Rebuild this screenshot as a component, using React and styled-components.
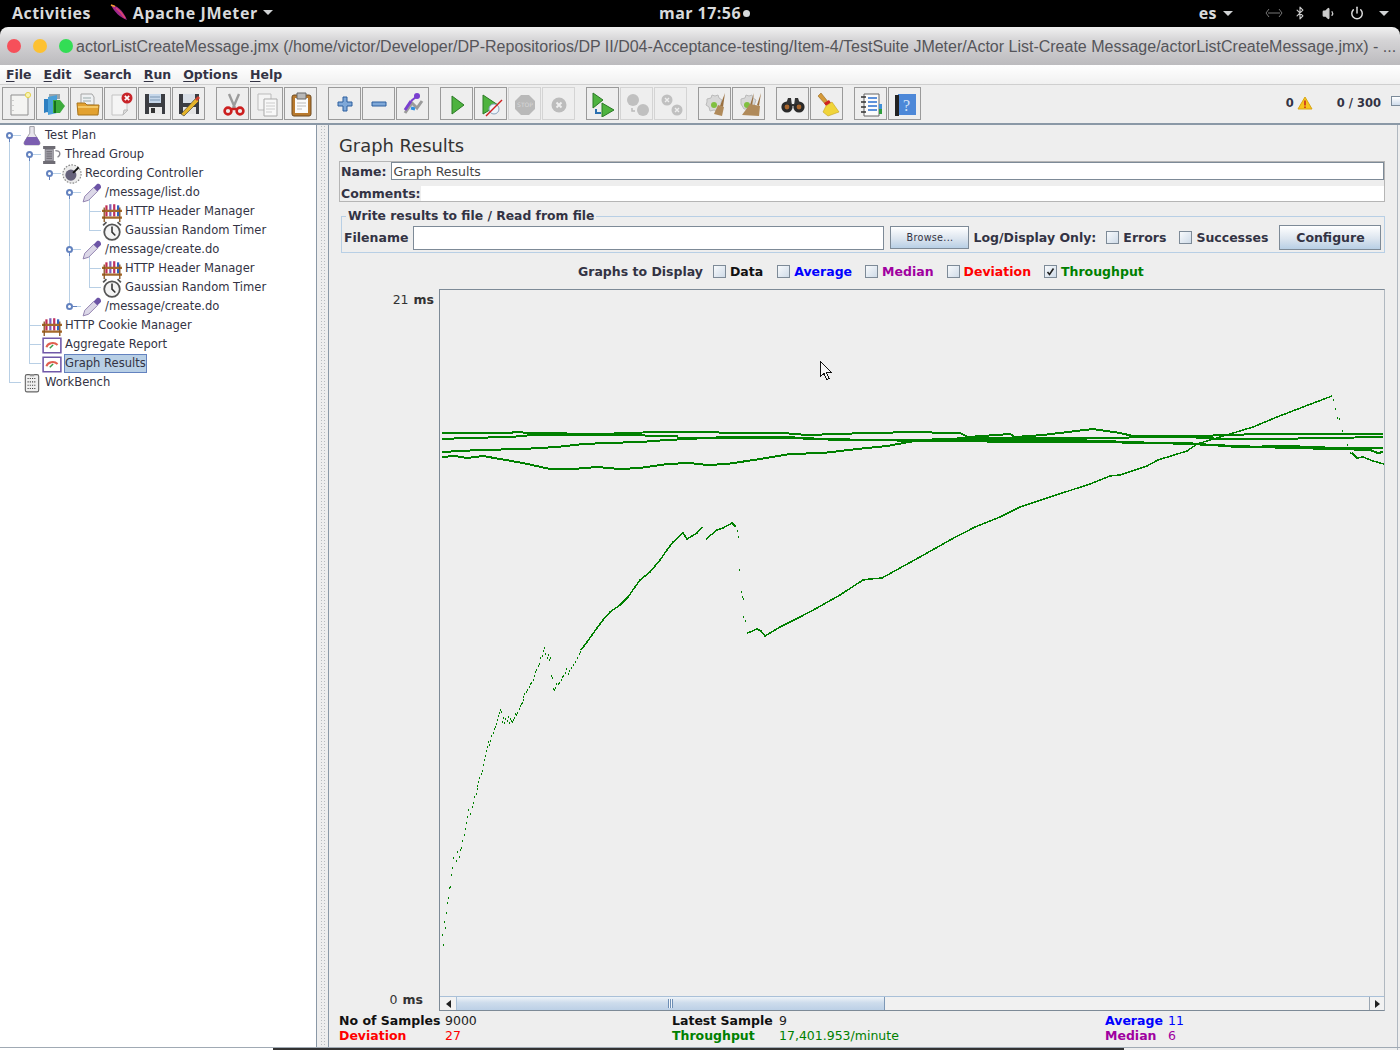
import React from 'react';
import styled, { createGlobalStyle } from 'styled-components';
import { Power, Volume1, Bluetooth } from 'lucide-react';

const GlobalStyle = createGlobalStyle`
  html, body { margin: 0; padding: 0; background: #000; }
  body { width: 1400px; height: 1050px; overflow: hidden; font-family: "DejaVu Sans", sans-serif; }
`;

const Screen = styled.div`
  width: 1400px;
  height: 1050px;
  display: flex;
  flex-direction: column;
  overflow: hidden;
  position: relative;
`;

const TopBar = styled.div`
  height: 27px;
  background: #000;
  color: #d8dadc;
  display: flex;
  align-items: center;
  font: bold 16px "Open Sans", "Noto Sans", sans-serif;
  letter-spacing: 0.45px;
  padding: 0 0 2px 12px;
  box-sizing: border-box;
  position: relative;
`;

const AppName = styled.div`
  display: flex;
  align-items: center;
  margin-left: 19px;
  gap: 5px;
  letter-spacing: 0.65px;
`;

const Clock = styled.div`
  position: absolute;
  left: 659px;
  top: 2px;
  display: flex;
  align-items: center;
`;

const Bullet = styled.i`
  width: 7px;
  height: 7px;
  border-radius: 50%;
  background: #d8dadc;
  margin-left: 2px;
`;

const Tray = styled.div`
  position: absolute;
  right: 11px;
  top: 2px;
  display: flex;
  align-items: center;
  color: #d8dadc;
`;

const Caret = styled.span`
  width: 0;
  height: 0;
  border-left: 5px solid transparent;
  border-right: 5px solid transparent;
  border-top: 5px solid #d0d2d4;
  margin-left: ${p => p.$gap || 0}px;
`;

const TitleBar = styled.div`
  height: 38px;
  background: linear-gradient(#f1f1f1 0, #d5d4d6 35%, #bcbbbe 100%);
  border-radius: 8px 8px 0 0;
  display: flex;
  align-items: center;
  padding-left: 7px;
  box-sizing: border-box;
  white-space: nowrap;
  overflow: hidden;
`;

const Dot = styled.span`
  width: 14px;
  height: 14px;
  border-radius: 50%;
  background: ${p => p.$c};
  margin-right: ${p => p.$gap}px;
  flex: none;
`;

const TitleText = styled.span`
  font: 16px "Liberation Sans", sans-serif;
  color: #55555a;
  margin-top: 2px;
`;

const MenuBar = styled.div`
  height: 20px;
  background: linear-gradient(#ffffff, #f1f1f1);
  display: flex;
  align-items: center;
  padding-left: 6px;
  gap: 12px;
  font: bold 12.5px "DejaVu Sans", sans-serif;
  color: #333344;
  border-bottom: 1px solid #cfcfcf;
  box-sizing: border-box;
  & u { text-decoration-thickness: 1px; text-underline-offset: 2px; }
`;

const ToolBar = styled.div`
  height: 40px;
  background: #eeeeee;
  display: flex;
  align-items: center;
  padding: 0 0 1px 2px;
  box-sizing: border-box;
  border-bottom: 2px solid #8a98a6;
  position: relative;
`;

const ToolGroup = styled.div`
  display: flex;
  gap: 1px;
  margin-right: 11px;
`;

const ToolButton = styled.div`
  width: 31px;
  height: 31px;
  border: 1px solid ${p => (p.$off ? '#d4d4d4' : '#9a9a9a')};
  background: #eeeeee;
  display: flex;
  align-items: center;
  justify-content: center;
  & svg { display: block; }
`;

const Counters = styled.div`
  position: absolute;
  right: 0;
  top: 11px;
  display: flex;
  align-items: center;
  font: bold 11.5px "DejaVu Sans", sans-serif;
  color: #333344;
`;

const MiniBox = styled.span`
  width: 8px;
  height: 8px;
  border: 1px solid #7b8a99;
  background: linear-gradient(#ffffff, #cfdceb);
  margin: -4px -1px 0 10px;
`;

const Body = styled.div`
  flex: 1;
  display: flex;
  background: #eeeeee;
  min-height: 0;
`;

const TreePane = styled.div`
  width: 316px;
  background: #ffffff;
  border-right: 1px solid #8a98a6;
  padding-top: 1px;
  flex: none;
  position: relative;
`;

const Row = styled.div`
  height: 19px;
  display: flex;
  align-items: center;
  position: relative;
  padding-left: ${p => p.$depth * 20 + 23}px;
  font: 11.55px "DejaVu Sans", sans-serif;
  color: #333344;
  & > svg { margin: 0 -1px; flex: none; position: relative; }
`;

const RowLabel = styled.span`
  margin-left: 3px;
  padding: 0 1px;
  height: 19px;
  line-height: 18px;
  box-sizing: border-box;
  ${p => p.$selected && 'background: #b8cfe5; outline: 1px solid #6382bf; outline-offset: -1px;'}
`;

const Wire = styled.i`
  position: absolute;
  background: #b8cfe5;
`;

const Handle = styled.b`
  position: absolute;
  width: 3px;
  height: 3px;
  border: 2px solid #6382bf;
  border-radius: 50%;
  background: #fff;
  top: 6px;
  &::after {
    content: '';
    position: absolute;
    background: #6382bf;
    ${p => (p.$closed
      ? 'left: 5px; top: 1px; width: 4px; height: 1px;'
      : 'left: 1px; top: 5px; width: 1px; height: 3px;')}
  }
`;

const Divider = styled.div`
  width: 11px;
  flex: none;
  border-right: 1px solid #8a98a6;
  display: flex;
  justify-content: center;
  &::before {
    content: '';
    width: 5px;
    background-image: radial-gradient(#b8bcc0 0.7px, transparent 0.9px);
    background-size: 3px 3px;
  }
`;

const Panel = styled.div`
  flex: 1;
  min-width: 0;
  padding: 8px 12px 0 10px;
  margin-right: 2px;
  border-right: 1px solid #b0b8c0;
  display: flex;
  flex-direction: column;
  position: relative;
`;

const Heading = styled.div`
  font: 17.9px "DejaVu Sans", sans-serif;
  color: #333333;
  height: 28px;
  line-height: 26px;
`;

const NameBox = styled.div`
  border: 1px solid #b5b5b5;
  height: 41px;
  box-sizing: border-box;
  display: flex;
  flex-direction: column;
  flex: none;
`;

const NameRow = styled.div`
  height: ${p => p.$h}px;
  display: flex;
  align-items: center;
  padding-left: 1px;
  margin-top: ${p => p.$mt || 0}px;
  font: bold 12.5px "DejaVu Sans", sans-serif;
  color: #333344;
`;

const TextField = styled.div`
  flex: ${p => (p.$w ? 'none' : 1)};
  width: ${p => (p.$w ? `${p.$w}px` : 'auto')};
  height: ${p => p.$h || 18}px;
  box-sizing: border-box;
  background: #fff;
  border: 1px solid #7d8a97;
  font: 12.5px "DejaVu Sans", sans-serif;
  color: #444;
  line-height: 18px;
  padding-left: 1px;
  margin-left: ${p => p.$ml || 0}px;
`;

const CommentFill = styled.div`
  flex: 1;
  height: 100%;
  background: #fff;
`;

const FileBox = styled.fieldset`
  border: 1px solid #b8cfe5;
  margin: 7px 0 0 2px;
  padding: 0 2px;
  height: 44px;
  box-sizing: border-box;
  display: flex;
  align-items: center;
  min-width: 0;
  flex: none;
  & legend {
    font: bold 12.35px "DejaVu Sans", sans-serif;
    color: #333344;
    padding: 0 2px;
    margin-left: 2px;
    line-height: 14px;
  }
`;

const FileRow = styled.div`
  display: flex;
  align-items: center;
  width: 100%;
  margin-top: 2px;
  font: bold 12.5px "DejaVu Sans", sans-serif;
  color: #333344;
  white-space: nowrap;
`;

const Gap = styled.span`
  width: ${p => p.$w}px;
  flex: none;
`;

const JButton = styled.div`
  width: ${p => p.$w}px;
  height: ${p => p.$h}px;
  flex: none;
  box-sizing: border-box;
  border: 1px solid #7d8a97;
  background: linear-gradient(#ffffff, #dce5ef 55%, #b8cfe5);
  display: flex;
  align-items: center;
  justify-content: center;
  font: ${p => (p.$bold ? 'bold 12.5px' : '9.6px')} "DejaVu Sans", sans-serif;
  letter-spacing: ${p => (p.$bold ? 0 : 0.3)}px;
  color: #333344;
`;

const Box = styled.span`
  width: 13px;
  height: 13px;
  box-sizing: border-box;
  flex: none;
  border: 1px solid #7d8a97;
  background: linear-gradient(135deg, #f8fafc, #cfdbe8);
  margin-right: 4px;
  position: relative;
  & svg { position: absolute; left: 0; top: 0; display: block; }
`;

const ChecksRow = styled.div`
  display: flex;
  align-items: center;
  height: 18px;
  margin-top: 9px;
  padding-left: 239px;
  font: bold 12.5px "DejaVu Sans", sans-serif;
  color: #333344;
  white-space: nowrap;
  flex: none;
`;

const CheckLabel = styled.span`
  color: ${p => p.$c};
  margin-right: ${p => p.$mr || 13}px;
`;

const ChartArea = styled.div`
  height: 722px;
  margin-top: 9px;
  display: flex;
  flex: none;
`;

const Axis = styled.div`
  width: 100px;
  flex: none;
  position: relative;
  font: 12.5px "DejaVu Sans", sans-serif;
  color: #333;
  line-height: 15px;
  & b { margin-left: 1px; }
`;

const AxisLabel = styled.span`
  position: absolute;
  white-space: pre;
  right: ${p => p.$r}px;
  top: ${p => p.$t}px;
`;

const ChartFrame = styled.div`
  flex: 1;
  display: flex;
  flex-direction: column;
  border: 1px solid #7d8a97;
  border-right-color: #b0b8c0;
  box-sizing: border-box;
  min-width: 0;
`;

const Plot = styled.div`
  height: 706px;
  flex: none;
  background: #eeeeee;
  position: relative;
  overflow: hidden;
  & svg { position: absolute; left: -440px; top: -290px; display: block; }
`;

const ScrollBar = styled.div`
  flex: 1;
  display: flex;
  border-top: 1px solid #a9c0d8;
  background: #f1f1f1;
  min-height: 0;
`;

const ScrollArrow = styled.div`
  width: ${p => (p.$end ? 15 : 16)}px;
  flex: none;
  display: flex;
  align-items: center;
  justify-content: center;
  background: #f2f2f2;
  border-left: ${p => (p.$end ? '1px solid #9aa6b2' : 'none')};
  box-sizing: border-box;
  &::after {
    content: '';
    border-top: 4px solid transparent;
    border-bottom: 4px solid transparent;
    ${p => (p.$end ? 'border-left: 5px solid #222;' : 'border-right: 5px solid #222;')}
  }
`;

const ScrollThumb = styled.div`
  width: 429px;
  flex: none;
  box-sizing: border-box;
  border-left: 1px solid #a9c0d8;
  border-right: 1px solid #7d98b6;
  background: linear-gradient(#eef3f8, #cddcec 45%, #bcd0e6);
  display: flex;
  align-items: center;
  justify-content: center;
  &::after {
    content: '';
    width: 5px;
    height: 9px;
    background: repeating-linear-gradient(90deg, #6d8eb5 0 1px, #f2f6fa 1px 2px);
  }
`;

const ScrollRest = styled.div`
  flex: 1;
`;

const Stats = styled.div`
  display: grid;
  grid-template-columns: 106px 227px 107px 326px 63px 1fr;
  grid-auto-rows: 15px;
  margin-top: 2px;
  font: 12.5px "DejaVu Sans", sans-serif;
  line-height: 15px;
  white-space: nowrap;
`;

const StatKey = styled.span`
  font-weight: bold;
  color: ${p => p.$c};
`;

const StatVal = styled.span`
  color: ${p => p.$c};
`;

const BottomLine = styled.div`
  position: absolute;
  left: 0;
  right: 0;
  bottom: 2px;
  height: 1px;
  background: #a0aab4;
`;

const Dock = styled.div`
  position: absolute;
  left: 273px;
  width: 851px;
  bottom: 0;
  height: 2px;
  background: #333333;
`;

const Feather = () => (
  <svg width="18" height="18" viewBox="0 0 18 18">
    <path d="M1 1 C6 1 13 6 17 16 C11 14 4 8 1 1Z" fill="#a3288e" />
    <path d="M6 4 C10 7 13 11 15 14" stroke="#e24a6a" strokeWidth="1.4" fill="none" />
    <path d="M1 1 L5 2.500" stroke="#f0a030" strokeWidth="1.6" />
  </svg>
);

// toolbar drawings, all on a 26px canvas
const icons = {
  new: <><path d="M5 4h17v20H5z" fill="#f4f4f2" stroke="#8f8f8f" /><circle cx="22" cy="4" r="2.6" fill="#f7f3b0" stroke="#e4d24f" /><path d="M7 9v1M7 14v1M7 19v1" stroke="#aaa" /></>,
  templates: <><path d="M4 8h7v15l-4-2-3 1z" fill="#2d7fc1" /><path d="M9 3h11v5H9z" fill="#9aa5ac" /><path d="M8 6l9-2v18l-9 2z" fill="#4aa0d8" /><path d="M13 9h7l5 6-5 7h-7z" fill="#3dac3d" /><path d="M14 10h2v12h-2z" fill="#156f1e" /></>,
  open: <><path d="M7 3h11l2 3v8H7z" fill="#eef0f2" stroke="#a5a5a5" /><path d="M9 7h8M9 10h8" stroke="#9aa" /><path d="M3 12h8l2 2h12l-1 10H4z" fill="#e2a12f" stroke="#a8741c" /><path d="M4 15h20v2H4z" fill="#f4c866" /></>,
  close: <><path d="M4 4h15v15l-4 5H4z" fill="#f5f5f5" stroke="#c4c4c4" /><path d="M15 24l1-5h4z" fill="#ddd" stroke="#bbb" /><circle cx="19" cy="7" r="5.5" fill="#c8252a" /><path d="M16.8 4.800l4.400 4.400m0-4.400l-4.400 4.400" stroke="#fff" strokeWidth="1.700" /></>,
  save: <><path d="M3 3h20v20H3z" fill="#3b3d42" /><path d="M7 3h12v9H7z" fill="#c6d7ea" /><path d="M8 6h10M8 9h10" stroke="#7d97b3" /><path d="M7 16h13v7H7z" fill="#e9e9e9" /><path d="M9 17h4v5H9z" fill="#333" /></>,
  saveAs: <><path d="M3 3h20v20H3z" fill="#3b3d42" /><path d="M7 3h12v9H7z" fill="#d8dee6" /><path d="M7 16h13v7H7z" fill="#e4e4e4" /><path d="M5 23L20 7l3 3L8 25z" fill="#e5b42a" stroke="#333" strokeWidth="0.6" /><path d="M19 8l3-3 2 2-3 3z" fill="#d0402f" /></>,
  cut: <><path d="M9 3l6 14M19 3l-6 14" stroke="#9b9b9b" strokeWidth="2.400" /><circle cx="8" cy="20" r="3.400" fill="none" stroke="#cc1f1f" strokeWidth="2.600" /><circle cx="20" cy="20" r="3.400" fill="none" stroke="#cc1f1f" strokeWidth="2.600" /><path d="M11 18l6 0" stroke="#cc1f1f" strokeWidth="2.400" /></>,
  copy: <><path d="M4 3h13v16H4z" fill="#f4f4f4" stroke="#bbb" /><path d="M10 8h13v17H10z" fill="#f8f8f8" stroke="#a9a9a9" /><path d="M12 12h9M12 15h9M12 18h9M12 21h6" stroke="#ccc" /></>,
  paste: <><rect x="4" y="4" width="19" height="21" rx="2" fill="#b97a2e" stroke="#6e4a20" /><path d="M7 7h13v15H7z" fill="#fbfbfb" /><path d="M9 2h9v6H9z" fill="#b8b8b8" stroke="#666" /><path d="M9 12h9M9 15h9M9 18h5" stroke="#bbb" /></>,
  plus: <path d="M11 6h4v5h5v4h-5v5h-4v-5H6v-4h5z" fill="#7fa8d8" stroke="#2d5e9e" />,
  minus: <path d="M6 11h14v4H6z" fill="#7fa8d8" stroke="#2d5e9e" />,
  toggle: <><path d="M5 22L12 12l5 5 5-7" fill="none" stroke="#9b9b9b" strokeWidth="3" /><path d="M5 19L11 10" stroke="#7a3fd0" strokeWidth="3" /><circle cx="17" cy="5" r="3" fill="#7a3fd0" /><path d="M11 10l5-4" stroke="#7a3fd0" strokeWidth="2" /><path d="M11 17l4 1" stroke="#2d8fe0" strokeWidth="3" /></>,
  run: <path d="M8 5l12 9-12 9z" fill="#4eb33f" stroke="#2b7a26" />,
  runNoPause: <><path d="M5 4l15 10-15 9z" fill="#4eb33f" stroke="#2b7a26" /><circle cx="16" cy="18" r="5" fill="#eef4fa" stroke="#8aa3bd" /><path d="M8 25L24 9" stroke="#d01f1f" strokeWidth="1.500" /></>,
  stop: <><path d="M9 4h8l6 6v8l-6 6H9l-6-6v-8z" fill="#b9b9b9" /><text x="13" y="16" fontSize="6" textAnchor="middle" fontFamily="DejaVu Sans" fill="#d8d8d8">STOP</text></>,
  shutdown: <><circle cx="13" cy="14" r="7.500" fill="#bcbcbc" /><path d="M10.500 11.500l5 5m0-5l-5 5" stroke="#eee" strokeWidth="2" /></>,
  remoteStart: <><path d="M3 2l10 7-10 8z" fill="#4eb33f" stroke="#2b7a26" /><path d="M12 12l12 7-12 7z" fill="#4eb33f" stroke="#2b7a26" /><path d="M6 18v4h5" fill="none" stroke="#2a6fb0" strokeWidth="2" /></>,
  remoteStop: <><circle cx="9" cy="9" r="6" fill="#c0c0c0" /><circle cx="19" cy="19" r="6" fill="#c0c0c0" /><path d="M8 17v3h3" fill="none" stroke="#bbb" strokeWidth="1.500" /></>,
  remoteShut: <><circle cx="9" cy="9" r="5.500" fill="#c0c0c0" /><circle cx="19" cy="19" r="5.500" fill="#c0c0c0" /><path d="M7 7l4 4m0-4l-4 4M17 17l4 4m0-4l-4 4" stroke="#eee" strokeWidth="1.400" /></>,
  clear: <><path d="M5 8l4-1 1-3 3 1 3-1 1 3 3 2-1 3 1 3-3 2-1 3-4-1-4 1-1-4-3-2 1-3z" fill="#d8d8d8" stroke="#bbb" /><circle cx="12" cy="14" r="3" fill="#80c040" /><path d="M23 2l-5 13 3 1z" fill="#9a7040" /><path d="M16 14l6 2-2 9-8-2z" fill="#b08a5a" /></>,
  clearAll: <><path d="M5 8l4-1 1-3 3 1 3-1 1 3 3 2-1 3-2 6H8l-3-5z" fill="#d8d8d8" stroke="#bbb" /><circle cx="11" cy="14" r="3" fill="#80c040" /><path d="M25 2l-4 12 2 1zM18 2l-4 12 2 1z" fill="#9a7040" /><path d="M14 13l10 2-1 10-17-1z" fill="#b08a5a" /></>,
  search: <><circle cx="7" cy="16" r="5.600" fill="#2a2a2a" /><circle cx="19" cy="16" r="5.600" fill="#2a2a2a" /><circle cx="7" cy="16" r="2.400" fill="#a8652c" /><circle cx="19" cy="16" r="2.400" fill="#a8652c" /><path d="M8 7h3l1 8h2l1-8h3l2 6H6z" fill="#333" /></>,
  broom: <><path d="M4 5l3-3 8 10-3 2z" fill="#d59a3a" stroke="#96661c" strokeWidth=".6" /><path d="M10 12l5-3 2 3-5 3z" fill="#d02020" /><path d="M12 15l6-4 7 10-11 4-5-4z" fill="#f0d43a" stroke="#c4a31d" strokeWidth=".6" /></>,
  list: <><path d="M6 3h15v22H6z" fill="#fbfbfb" stroke="#666" /><path d="M10 7h9M10 11h9M10 15h9M10 19h9" stroke="#2a6fd0" strokeWidth="1.400" /><path d="M3 6h5M3 11h5M3 16h5M3 21h5" stroke="#333" strokeWidth="1.600" /><path d="M21 13h3v5h-3z" fill="#3f90d8" /><path d="M21 18h3v5h-3z" fill="#2f9e3d" /></>,
  help: <><path d="M6 3h18v21H6z" fill="#4d88d8" /><path d="M3 4h4v21H3z" fill="#222" /><text x="11" y="20" fontSize="16" fontFamily="Liberation Serif" fill="#d5e4f7">?</text></>,
};

const ToolIcon = ({ name }) => (
  <svg width="26" height="26" viewBox="0 0 26 26">{icons[name]}</svg>
);

const toolGroups = [
  ['new', 'templates', 'open', 'close', 'save', 'saveAs'],
  ['cut', 'copy', 'paste'],
  ['plus', 'minus', 'toggle'],
  ['run', 'runNoPause', 'stop', 'shutdown'],
  ['remoteStart', 'remoteStop', 'remoteShut'],
  ['clear', 'clearAll'],
  ['search', 'broom'],
  ['list', 'help'],
];
const disabledTools = ['stop', 'shutdown', 'remoteStop', 'remoteShut'];

// tree node drawings, 18px canvas shown at 20px
const treeIcons = {
  flask: <><path d="M7 0.500h4v6l5 8c.5 1.500 0 2.500-1 2.500H3c-1 0-1.500-1-1-2.500l5-8z" fill="#e8e6ec" stroke="#8a8890" strokeWidth=".7" /><path d="M4.500 10h9l2.500 4.500c.5 1.500 0 2.500-1 2.500H3c-1 0-1.500-1-1-2.500z" fill="#7b5eb0" /></>,
  spool: <><path d="M1 1h11v2.500h-1.500v11H12V17H1v-2.500h1.500v-11H1z" fill="#6e6c74" /><path d="M3 4h7v10H3z" fill="#a3a1aa" /><path d="M4 6h5M4 8h5M4 10h5M4 12h5" stroke="#77757d" /><path d="M12 5c5 0 5 4 2 6" stroke="#8a8890" strokeWidth="1.200" fill="none" /></>,
  dial: <><circle cx="9" cy="9" r="8.200" fill="#ececec" stroke="#888" strokeWidth="1" strokeDasharray="1.500 1.200" /><circle cx="8" cy="10" r="5" fill="#64607a" /><path d="M10 8l5-5" stroke="#111" strokeWidth="1.800" /></>,
  dropper: <><path d="M1 17l1.500-5 8-8 3.500 3.500-8 8z" fill="#dcd8e8" stroke="#8878a8" strokeWidth=".8" /><path d="M10.500 4l3-3c1.800-1 4.200 1.400 3.500 3.500l-3 3z" fill="#6c54a6" /></>,
  rack: <><path d="M3 3h2v10H3z" fill="#c02c50" /><path d="M6.500 2h2v11h-2z" fill="#7a60b8" /><path d="M10 2h2v11h-2z" fill="#c03060" /><path d="M13.500 3h2v10h-2z" fill="#3060c0" /><path d="M0 8h18M0 14h18" stroke="#a5692a" strokeWidth="2" /><path d="M2 5v13M16 5v13" stroke="#8a5520" strokeWidth="1.200" /></>,
  clock: <><circle cx="9" cy="10" r="7" fill="#f4f4f4" stroke="#555" strokeWidth="1.600" /><path d="M9 5v5l3 3" stroke="#333" strokeWidth="1.400" fill="none" /><path d="M1 4l3-3M17 4l-3-3" stroke="#555" strokeWidth="1.600" /></>,
  report: <><path d="M1 3h16v13H1z" fill="#fff" stroke="#7058a8" strokeWidth="1.400" /><path d="M4 11c1-4 7-5 10-2" stroke="#e06050" strokeWidth="1.800" fill="none" /><path d="M7 12l3-3" stroke="#3a9a4a" strokeWidth="1.300" /></>,
  bench: <><rect x="3" y="1.500" width="12" height="15.500" rx="1.500" fill="#f0f0f0" stroke="#666" /><path d="M5 5h8M5 8h8M5 11h8M5 14h8" stroke="#444" strokeDasharray="1 1" /><path d="M7 1h4v2H7z" fill="#999" /></>,
};

const tree = [
  { d: 0, icon: 'flask', label: 'Test Plan', open: true },
  { d: 1, icon: 'spool', label: 'Thread Group', open: true },
  { d: 2, icon: 'dial', label: 'Recording Controller', open: true },
  { d: 3, icon: 'dropper', label: '/message/list.do', open: true },
  { d: 4, icon: 'rack', label: 'HTTP Header Manager' },
  { d: 4, icon: 'clock', label: 'Gaussian Random Timer' },
  { d: 3, icon: 'dropper', label: '/message/create.do', open: true },
  { d: 4, icon: 'rack', label: 'HTTP Header Manager' },
  { d: 4, icon: 'clock', label: 'Gaussian Random Timer' },
  { d: 3, icon: 'dropper', label: '/message/create.do', open: false },
  { d: 1, icon: 'rack', label: 'HTTP Cookie Manager' },
  { d: 1, icon: 'report', label: 'Aggregate Report' },
  { d: 1, icon: 'report', label: 'Graph Results', selected: true },
  { d: 0, icon: 'bench', label: 'WorkBench' },
];

// vertical guide lines: x, first row, last row
const guides = [
  [9, 0, 13],
  [29, 1, 12],
  [69, 3, 9],
  [89, 3, 5],
  [89, 6, 8],
];

const TreeRow = ({ node }) => {
  const x = node.d * 20 + 9;
  const hasHandle = node.open !== undefined;
  return (
    <Row $depth={node.d}>
      <Wire style={{ left: x, top: 9, width: 12, height: 1 }} />
      {hasHandle && <Handle $closed={!node.open} style={{ left: x - 3 }} />}
      <svg width="20" height="20" viewBox="0 0 18 18">{treeIcons[node.icon]}</svg>
      <RowLabel $selected={node.selected}>{node.label}</RowLabel>
    </Row>
  );
};

const line = pts => pts.map(p => p.join(',')).join(' ');

const flat = [
  [[442, 433], [512, 433], [513, 432], [533, 433], [600, 434], [657, 432], [707, 432], [730, 433], [783, 433], [807, 435], [867, 433], [920, 432], [943, 433], [960, 433], [968, 437], [1010, 434], [1015, 437], [1043, 435], [1093, 429], [1120, 433], [1133, 436], [1197, 436], [1260, 434], [1383, 434]],
  [[442, 439], [466, 438], [510, 437], [533, 435], [640, 435], [650, 436], [677, 436], [678, 438], [710, 438], [723, 437], [783, 437], [807, 438], [835, 440], [920, 440], [970, 438], [1073, 438], [1187, 437], [1223, 439], [1270, 439], [1383, 437]],
  [[442, 452], [480, 450], [523, 449], [557, 447], [583, 444], [607, 443], [640, 442], [667, 440], [707, 438], [780, 438], [920, 441], [1053, 442], [1187, 443], [1237, 447], [1287, 446], [1337, 448], [1383, 448]],
  [[442, 457], [455, 456], [467, 458], [483, 456], [500, 459], [523, 463], [550, 469], [573, 469], [597, 467], [620, 469], [640, 468], [667, 464], [690, 463], [707, 465], [727, 464], [760, 459], [790, 454], [823, 453], [857, 449], [887, 446], [920, 440], [1073, 440], [1187, 444], [1287, 448], [1337, 449], [1370, 450], [1378, 453], [1383, 452]],
];

const rising = [
  [[581, 650], [587, 642], [597, 628], [603, 620], [610, 612], [620, 605], [628, 597], [640, 580], [650, 572], [660, 560], [667, 550], [673, 542], [683, 533], [687, 539], [697, 533], [702, 527]],
  [[706, 539], [717, 530], [723, 528], [732, 523], [736, 527]],
  [[747, 633], [750, 632], [757, 629], [761, 631], [765, 636], [780, 627], [800, 617], [817, 608], [840, 595], [863, 580], [870, 579], [882, 578], [900, 568], [920, 557], [950, 540], [975, 527], [1000, 517], [1020, 507], [1050, 497], [1090, 484], [1110, 476], [1120, 475], [1147, 466], [1158, 460], [1187, 451], [1197, 444], [1220, 437], [1253, 427], [1277, 417], [1303, 407], [1332, 396]],
  [[1352, 453], [1357, 458], [1363, 457], [1373, 461], [1384, 464]],
];

// the sparse start of the curve, read off pixel by pixel
const dots = [
  [443, 944], [442, 934], [445, 927], [444, 921], [446, 912], [447, 902], [448, 897], [449, 887], [450, 886], [451, 874], [452, 867], [453, 857], [456, 860], [457, 851], [459, 856], [460, 849], [461, 847], [462, 840], [464, 834], [465, 828], [466, 822], [467, 816], [468, 809], [470, 813], [472, 806], [473, 802], [474, 796], [476, 793], [477, 788], [477, 785], [478, 781], [479, 777], [481, 773], [482, 770], [483, 764], [484, 759], [485, 755], [486, 750], [487, 746], [489, 744], [488, 741], [490, 740], [491, 735], [493, 732], [494, 728], [495, 726], [496, 723], [497, 719], [498, 715], [499, 712], [500, 709], [501, 711], [502, 721], [503, 717], [504, 722], [505, 718], [507, 720], [508, 716], [509, 722], [510, 718], [511, 720], [512, 721], [513, 719], [514, 717], [515, 713], [516, 714], [517, 712], [519, 708], [520, 705], [521, 703], [522, 702], [523, 699], [523, 696], [524, 693], [526, 691], [527, 689], [529, 686], [530, 683], [531, 682], [533, 679], [534, 675], [535, 671], [536, 669], [538, 665], [539, 663], [540, 657], [542, 655], [543, 650], [544, 647], [545, 653], [548, 654], [547, 657], [549, 659], [550, 657], [551, 675], [552, 677], [553, 688], [554, 689], [555, 687], [556, 683], [558, 683], [559, 682], [561, 679], [562, 676], [563, 675], [565, 672], [566, 668], [568, 673], [569, 670], [571, 667], [573, 664], [575, 661], [577, 657], [579, 653], [580, 651],
  [737, 530], [738, 536], [739, 569], [741, 591], [742, 596], [743, 598], [743, 616], [745, 620],
  [1333, 399], [1335, 408], [1337, 417], [1339, 418], [1342, 430], [1344, 433], [1347, 444], [1350, 452],
];

const ThroughputChart = () => (
  <svg width="1400" height="1050" viewBox="0 0 1400 1050" shapeRendering="crispEdges">
    <g fill="none" stroke="#008000">
      {flat.map((p, i) => <polyline key={i} points={line(p)} strokeWidth="2" />)}
      {rising.map((p, i) => <polyline key={i} points={line(p)} strokeWidth="1.500" />)}
    </g>
    {dots.map((d, i) => <rect key={i} x={d[0]} y={d[1]} width="1" height="2" fill="#008000" />)}
    <path d="M820.500 361.500v15l3.500-3 2.500 6 2.500-1-2.500-6h5z" fill="#f4f4f4" stroke="#111" />
  </svg>
);

export default function App() {
  return (
    <Screen>
      <GlobalStyle />
      <TopBar>
        <span>Activities</span>
        <AppName>
          <Feather />
          Apache JMeter
          <Caret />
        </AppName>
        <Clock>mar 17:56<Bullet /></Clock>
        <Tray>
          es
          <Caret $gap={6} />
          <svg width="18" height="10" viewBox="0 0 18 10" style={{ marginLeft: 32 }}>
            <path d="M4 1L1 5l3 4M14 1l3 4-3 4M3 5h12" stroke="#777" fill="none" />
          </svg>
          <Bluetooth size={14} color="#ccc" style={{ marginLeft: 10 }} />
          <Volume1 size={15} color="#ccc" fill="#ccc" style={{ marginLeft: 15 }} />
          <Power size={14} color="#ddd" strokeWidth={2.5} style={{ marginLeft: 13 }} />
          <Caret $gap={15} />
        </Tray>
      </TopBar>
      <TitleBar>
        <Dot $c="#f6505a" $gap={12} />
        <Dot $c="#fdc131" $gap={12} />
        <Dot $c="#33dd55" $gap={3} />
        <TitleText>actorListCreateMessage.jmx (/home/victor/Developer/DP-Repositorios/DP II/D04-Acceptance-testing/Item-4/TestSuite JMeter/Actor List-Create Message/actorListCreateMessage.jmx) - ...</TitleText>
      </TitleBar>
      <MenuBar>
        <span><u>F</u>ile</span>
        <span><u>E</u>dit</span>
        <span>Search</span>
        <span><u>R</u>un</span>
        <span><u>O</u>ptions</span>
        <span><u>H</u>elp</span>
      </MenuBar>
      <ToolBar>
        {toolGroups.map((g, i) => (
          <ToolGroup key={i}>
            {g.map(name => (
              <ToolButton key={name} $off={disabledTools.includes(name)}>
                <ToolIcon name={name} />
              </ToolButton>
            ))}
          </ToolGroup>
        ))}
        <Counters>
          0
          <svg width="16" height="14" viewBox="0 0 16 14" style={{ marginLeft: 3 }}>
            <path d="M8 1l7 12H1z" fill="#f7c51c" stroke="#d9a514" />
            <path d="M8 4.500v5M8 10.500v1.500" stroke="#c8281e" strokeWidth="1.600" />
          </svg>
          <Gap $w={24} />
          0 / 300
          <MiniBox />
        </Counters>
      </ToolBar>
      <Body>
        <TreePane>
          {guides.map(([x, a, b]) => (
            <Wire key={`${x}-${a}`} style={{ left: x, top: a * 19 + 10, width: 1, height: (b - a) * 19 }} />
          ))}
          {tree.map((node, i) => <TreeRow key={i} node={node} />)}
        </TreePane>
        <Divider />
        <Panel>
          <Heading>Graph Results</Heading>
          <NameBox>
            <NameRow $h={18}>
              Name:
              <TextField $ml={5}>Graph Results</TextField>
            </NameRow>
            <NameRow $h={15} $mt={6}>
              Comments:
              <CommentFill />
            </NameRow>
          </NameBox>
          <FileBox>
            <legend>Write results to file / Read from file</legend>
            <FileRow>
              Filename
              <Gap $w={5} />
              <TextField $w={471} $h={24} />
              <Gap $w={6} />
              <JButton $w={79} $h={23}>Browse...</JButton>
              <Gap $w={4} />
              Log/Display Only:
              <Gap $w={10} />
              <Box />Errors
              <Gap $w={13} />
              <Box />Successes
              <Gap $w={11} />
              <JButton $w={102} $h={25} $bold>Configure</JButton>
            </FileRow>
          </FileBox>
          <ChecksRow>
            <CheckLabel $mr={10}>Graphs to Display</CheckLabel>
            <Box /><CheckLabel $c="#111" $mr={14}>Data</CheckLabel>
            <Box /><CheckLabel $c="#0000ff">Average</CheckLabel>
            <Box /><CheckLabel $c="#a000a0">Median</CheckLabel>
            <Box /><CheckLabel $c="#ff0000">Deviation</CheckLabel>
            <Box>
              <svg width="11" height="11" viewBox="0 0 11 11">
                <path d="M2.500 6l2 2.500 4-6" stroke="#222" strokeWidth="1.600" fill="none" />
              </svg>
            </Box>
            <CheckLabel $c="#008000">Throughput</CheckLabel>
          </ChecksRow>
          <ChartArea>
            <Axis>
              <AxisLabel $r={5} $t={3}>21 <b>ms</b></AxisLabel>
              <AxisLabel $r={16} $t={703}>0 <b>ms</b></AxisLabel>
            </Axis>
            <ChartFrame>
              <Plot>
                <ThroughputChart />
              </Plot>
              <ScrollBar>
                <ScrollArrow />
                <ScrollThumb />
                <ScrollRest />
                <ScrollArrow $end />
              </ScrollBar>
            </ChartFrame>
          </ChartArea>
          <Stats>
            <StatKey $c="#111">No of Samples</StatKey>
            <StatVal $c="#222">9000</StatVal>
            <StatKey $c="#111">Latest Sample</StatKey>
            <StatVal $c="#222">9</StatVal>
            <StatKey $c="#0000ff">Average</StatKey>
            <StatVal $c="#0000ff">11</StatVal>
            <StatKey $c="#ff0000">Deviation</StatKey>
            <StatVal $c="#ff0000">27</StatVal>
            <StatKey $c="#008000">Throughput</StatKey>
            <StatVal $c="#008000">17,401.953/minute</StatVal>
            <StatKey $c="#a000a0">Median</StatKey>
            <StatVal $c="#a000a0">6</StatVal>
          </Stats>
        </Panel>
      </Body>
      <BottomLine />
      <Dock />
    </Screen>
  );
}
